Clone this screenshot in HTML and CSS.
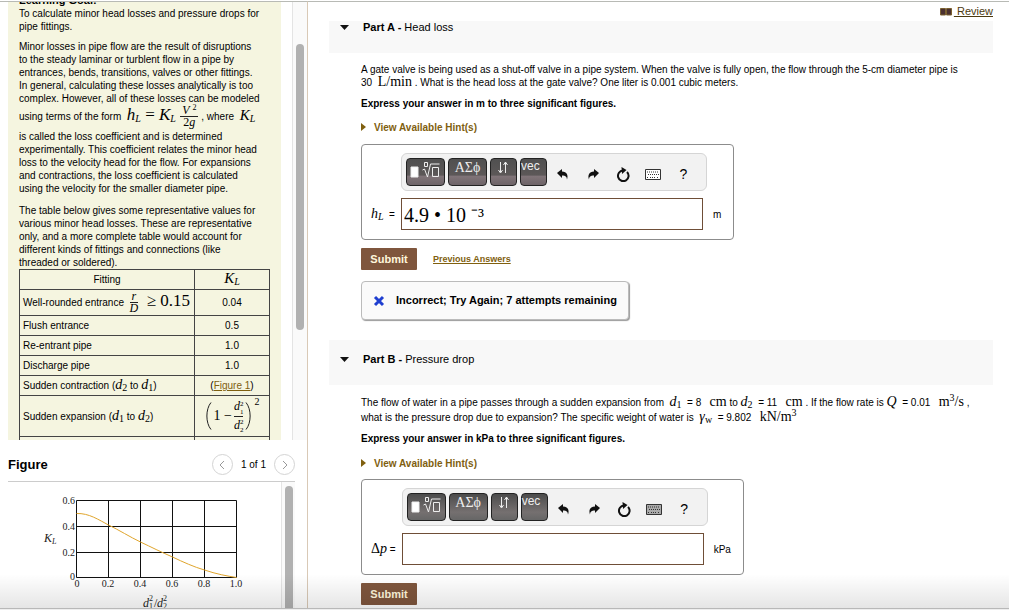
FILE: index.html
```html
<!DOCTYPE html>
<html lang="en">
<head>
<meta charset="utf-8">
<title>Head loss and pressure drop</title>
<link rel="stylesheet" href="styles.css">
</head>
<body>
<div class="page">
  <aside class="side">
    <div class="goal-pane">
      <section class="goal">
        <h2 class="goal-title">Learning Goal:</h2>
        <p>To calculate minor head losses and pressure drops for<br>pipe fittings.</p>
        <p>Minor losses in pipe flow are the result of disruptions<br>to the steady laminar or turblent flow in a pipe by<br>entrances, bends, transitions, valves or other fittings.<br>In general, calculating these losses analytically is too<br>complex. However, all of these losses can be modeled<span class="equation">using terms of the form&nbsp; <span class="math math-lg"><i>h<sub>L</sub></i> = <i>K<sub>L</sub></i> <span class="frac"><span class="num"><i>V</i> <sup>2</sup></span><span class="den">2<i>g</i></span></span></span> , where&nbsp; <span class="math math-md"><i>K<sub>L</sub></i></span></span>is called the loss coefficient and is determined<br>experimentally. This coefficient relates the minor head<br>loss to the velocity head for the flow. For expansions<br>and contractions, the loss coefficient is calculated<br>using the velocity for the smaller diameter pipe.</p>
        <p class="lead-in">The table below gives some representative values for<br>various minor head losses. These are representative<br>only, and a more complete table would account for<br>different kinds of fittings and connections (like<br>threaded or soldered).</p>
        <table class="losses">
          <thead><tr><th>Fitting</th><th><span class="math math-md"><i>K<sub>L</sub></i></span></th></tr></thead>
          <tbody>
            <tr class="row-tall"><td>Well-rounded entrance&nbsp; <span class="math math-lg"><span class="frac"><span class="num"><i>r</i></span><span class="den"><i>D</i></span></span>&nbsp; ≥ 0.15</span></td><td>0.04</td></tr>
            <tr><td>Flush entrance</td><td>0.5</td></tr>
            <tr><td>Re-entrant pipe</td><td>1.0</td></tr>
            <tr><td>Discharge pipe</td><td>1.0</td></tr>
            <tr><td>Sudden contraction (<span class="math"><i>d</i><sub>2</sub></span> to <span class="math"><i>d</i><sub>1</sub></span>)</td><td>(<a class="link" href="#figure">Figure 1</a>)</td></tr>
            <tr class="row-big"><td>Sudden expansion (<span class="math"><i>d</i><sub>1</sub></span> to <span class="math"><i>d</i><sub>2</sub></span>)</td>
              <td><span class="math paren-group"><svg class="paren" viewBox="0 0 7 28" aria-hidden="true"><path d="M6 .5C.5 7 .5 21 6 27.5"/></svg><span>1 −</span><span class="frac"><span class="num"><i>d</i><span class="pair"><span>2</span><span>1</span></span></span><span class="den"><i>d</i><span class="pair"><span>2</span><span>2</span></span></span></span><svg class="paren" viewBox="0 0 7 28" aria-hidden="true"><path d="M1 .5C6.500 7 6.500 21 1 27.500"/></svg><span class="power">2</span></span></td></tr>
            <tr><td></td><td></td></tr>
          </tbody>
        </table>
      </section>
      <div class="track goal-track"><div class="thumb goal-thumb"></div></div>
    </div>
    <section class="figure-pane" id="figure">
      <header class="figure-head">
        <h2 class="figure-title">Figure</h2>
        <button class="round" type="button" aria-label="Previous figure"><svg viewBox="0 0 8 10"><path d="M6 1 2 5l4 4"/></svg></button>
        <span class="count">1 of 1</span>
        <button class="round" type="button" aria-label="Next figure"><svg viewBox="0 0 8 10"><path d="m2 1 4 4-4 4"/></svg></button>
      </header>
      <div class="figure-body">
        <svg class="chart" viewBox="0 0 273 127" role="img" aria-label="Loss coefficient against area ratio">
          <path class="grid" d="M68.500 18.500h160v77h-160zM100.500 18.500v77M132.500 18.500v77M164.500 18.500v77M196.500 18.500v77M68.500 44.500h160M68.500 70.500h160"/>
          <path class="curve" d="M68.500 31.500C81 31 91 38 100.500 43C111 48 122 55 132.500 60C143 65 153 70 164.500 75C175 80 186 85 196.500 88C208 92 219 94 228.500 95.500"/>
          <g class="ticks">
            <g text-anchor="end"><text x="67" y="22">0.6</text><text x="67" y="48">0.4</text><text x="67" y="74">0.2</text><text x="67" y="98">0</text></g>
            <g text-anchor="middle"><text x="69" y="105">0</text><text x="100" y="105">0.2</text><text x="132" y="105">0.4</text><text x="164" y="105">0.6</text><text x="196" y="105">0.8</text><text x="228" y="105">1.0</text></g>
          </g>
          <g class="axis">
            <text class="it" x="36" y="60">K<tspan class="small" dy="2">L</tspan></text>
            <text class="it" x="135" y="125">d</text><text class="small" x="141" y="119">2</text><text class="small" x="141" y="127">1</text>
            <text x="146" y="125">/</text><text class="it" x="149" y="125">d</text><text class="small" x="155" y="119">2</text><text class="small" x="155" y="127">2</text>
          </g>
        </svg>
        <div class="track figure-track"><div class="thumb figure-thumb"></div></div>
      </div>
    </section>
  </aside>

  <main class="main">
    <div class="review"><svg class="book" viewBox="0 0 12 8" aria-hidden="true"><path d="M.5.500h5v6.500h-5zM6.500.500h5v6.500h-5z"/></svg><a href="#review">&nbsp;Review</a></div>

    <section class="part">
      <header class="part-head part-head-first"><svg class="caret" viewBox="0 0 9 5" aria-hidden="true"><path d="M0 0h9L4.500 5z"/></svg><h2><b>Part A -</b> Head loss</h2></header>
      <div class="part-body">
        <p>A gate valve is being used as a shut-off valve in a pipe system. When the valve is fully open, the flow through the 5-cm diameter pipe is<br>30 &nbsp;<span class="math">L/min</span> . What is the head loss at the gate valve? One liter is 0.001 cubic meters.</p>
        <p class="express">Express your answer in m to three significant figures.</p>
        <button class="hints" type="button"><svg viewBox="0 0 5 8" aria-hidden="true"><path d="M0 0l5 4-5 4z"/></svg>View Available Hint(s)</button>
        <form class="answer">
          <div class="tools">
            <button class="key key-wide" type="button" aria-label="Templates"><svg viewBox="0 0 31 18"><path class="fill" d="M1 6h7v10H1z"/><path d="M14.500 1.500h3v4h-3zM12.500 9l2-1 3 8 3-13h9M22.500 6.500h6v9h-6z"/></svg></button>
            <button class="key key-wide" type="button">ΑΣϕ</button>
            <button class="key" type="button" aria-label="Arrows"><svg viewBox="0 0 12 14"><path d="M3.500 1v10M1.500 9l2 3 2-3M8.500 12V1M6.500 4l2-3 2 3"/></svg></button>
            <button class="key key-vec" type="button">vec</button>
            <button class="tool" type="button" aria-label="Undo"><svg viewBox="0 0 12 12"><path class="solid" d="M0 5 5 1v2.500c5 0 6.500 4 5 8-.3-3-1.500-4-5-4V10z"/></svg></button>
            <button class="tool" type="button" aria-label="Redo"><svg viewBox="0 0 12 12"><path class="solid" d="M12 5 7 1v2.500c-5 0-6.500 4-5 8 .3-3 1.500-4 5-4V10z"/></svg></button>
            <button class="tool" type="button" aria-label="Reset"><svg class="reset" viewBox="0 0 14 15"><path class="ring" d="M7 3.500A5.300 5.300 0 1 0 11 5"/><path class="solid" d="M5.500 0l5 3-4.500 4z"/></svg></button>
            <button class="tool" type="button" aria-label="Keyboard"><svg class="board" viewBox="0 0 16 11"><path class="frame" d="M.5.500h15v10H.5z"/><path class="dots" d="M2 3h12M3 5.500h11M2 8.500h2M5 8.500h6M12 8.500h2"/></svg></button>
            <button class="tool" type="button" aria-label="Help">?</button>
          </div>
          <label class="symbol" for="answer-a"><span class="math"><i>h<sub>L</sub></i></span>&nbsp; =</label>
          <input class="field" id="answer-a" type="text" value="4.9 • 10 ⁻³">
          <span class="unit">m</span>
        </form>
        <div class="actions"><button class="submit" type="submit">Submit</button><a class="previous" href="#previous">Previous Answers</a></div>
        <div class="feedback"><svg viewBox="0 0 12 12" aria-hidden="true"><path d="M2 2l8 8M10 2l-8 8"/></svg>Incorrect; Try Again; 7 attempts remaining</div>
      </div>
    </section>

    <section class="part">
      <header class="part-head"><svg class="caret" viewBox="0 0 9 5" aria-hidden="true"><path d="M0 0h9L4.500 5z"/></svg><h2><b>Part B -</b> Pressure drop</h2></header>
      <div class="part-body part-body-b">
        <p>The flow of water in a pipe passes through a sudden expansion from&nbsp; <span class="math"><i>d</i><sub>1</sub></span>&nbsp; = 8 &nbsp; <span class="math">cm</span> to <span class="math"><i>d</i><sub>2</sub></span>&nbsp; = 11 &nbsp; <span class="math">cm</span> . If the flow rate is <span class="math"><i>Q</i></span>&nbsp; = 0.01 &nbsp; <span class="math">m<sup>3</sup>/s</span> ,<br>what is the pressure drop due to expansion? The specific weight of water is&nbsp; <span class="math"><i>γ</i><sub>w</sub></span>&nbsp; = 9.802 &nbsp; <span class="math">kN/m<sup>3</sup></span></p>
        <p class="express">Express your answer in kPa to three significant figures.</p>
        <button class="hints" type="button"><svg viewBox="0 0 5 8" aria-hidden="true"><path d="M0 0l5 4-5 4z"/></svg>View Available Hint(s)</button>
        <form class="answer">
          <div class="tools tools-plain">
            <button class="key key-wide" type="button" aria-label="Templates"><svg viewBox="0 0 31 18"><path class="fill" d="M1 6h7v10H1z"/><path d="M14.500 1.500h3v4h-3zM12.500 9l2-1 3 8 3-13h9M22.500 6.500h6v9h-6z"/></svg></button>
            <button class="key key-wide" type="button">ΑΣϕ</button>
            <button class="key" type="button" aria-label="Arrows"><svg viewBox="0 0 12 14"><path d="M3.500 1v10M1.500 9l2 3 2-3M8.500 12V1M6.500 4l2-3 2 3"/></svg></button>
            <button class="key key-vec" type="button">vec</button>
            <button class="tool" type="button" aria-label="Undo"><svg viewBox="0 0 12 12"><path class="solid" d="M0 5 5 1v2.500c5 0 6.500 4 5 8-.3-3-1.500-4-5-4V10z"/></svg></button>
            <button class="tool" type="button" aria-label="Redo"><svg viewBox="0 0 12 12"><path class="solid" d="M12 5 7 1v2.500c-5 0-6.500 4-5 8 .3-3 1.500-4 5-4V10z"/></svg></button>
            <button class="tool" type="button" aria-label="Reset"><svg class="reset" viewBox="0 0 14 15"><path class="ring" d="M7 3.500A5.300 5.300 0 1 0 11 5"/><path class="solid" d="M5.500 0l5 3-4.500 4z"/></svg></button>
            <button class="tool" type="button" aria-label="Keyboard"><svg class="board board-gray" viewBox="0 0 16 11"><path class="frame" d="M.5.500h15v10H.5z"/><path class="dots" d="M2 3h12M3 5.500h11M2 8.500h2M5 8.500h6M12 8.500h2"/></svg></button>
            <button class="tool" type="button" aria-label="Help">?</button>
          </div>
          <label class="symbol" for="answer-b"><span class="math">Δ<i>p</i></span> =</label>
          <input class="field" id="answer-b" type="text">
          <span class="unit">kPa</span>
        </form>
        <div class="actions"><button class="submit" type="submit">Submit</button></div>
      </div>
    </section>
  </main>
</div>
</body>
</html>
```
FILE: styles.css
```css
* { box-sizing: border-box; }
body {
  margin: 0;
  background: #fff;
  color: #000;
  font: 10px/13px "Liberation Sans", Arial, sans-serif;
}
h2, p { margin: 0; }
button, input { font: inherit; }
button { border: 0; padding: 0; background: none; color: inherit; cursor: pointer; }
svg { display: block; }

.page {
  display: grid;
  grid-template-columns: 308px 1fr;
  height: 100vh;
  padding-top: 1px;
  border-bottom: 1px solid #eee;
  position: relative;
}
.page::after {
  content: "";
  position: absolute;
  inset: auto 0 0;
  height: 34px;
  border-bottom: 1px solid #b8b8b8;
  background: linear-gradient(rgba(0, 0, 0, 0), rgba(0, 0, 0, .1));
  pointer-events: none;
}

/* Maths */
.math { font-family: "Liberation Serif", serif; font-size: 14px; line-height: 1px; }
.math-md { font-size: 15px; }
.math-lg { font-size: 17px; }
.math sub, .math sup { font-size: 10px; line-height: 0; }
.math sub { vertical-align: -2px; }
.math sup { vertical-align: 5px; }
.frac {
  display: inline-flex;
  flex-direction: column;
  align-items: center;
  vertical-align: middle;
  font-size: 12px;
  line-height: 11px;
}
.math .frac sup { font-size: 8px; vertical-align: 4px; }
.num { padding: 0 2px; border-bottom: 1px solid #222; }
.pair {
  display: inline-flex;
  flex-direction: column;
  vertical-align: middle;
  font-size: 7px;
  line-height: 8px;
}
.equation { display: block; height: 25px; line-height: 23px; white-space: nowrap; }

/* Left column */
.side {
  display: flex;
  flex-direction: column;
  min-height: 0;
  border-top: 1px solid #b8bab5;
  border-right: 1px solid #d9c9b6;
}
.goal-pane { display: flex; flex: 1; min-height: 0; overflow: hidden; padding-left: 8px; }
.goal { flex: 1; min-width: 0; padding: 0 11px; margin-right: 11px; background: #f5f5e0; }
.goal-title { margin-top: -8px; font-size: 11px; line-height: 13px; }
.goal p { margin-bottom: 7px; }
.goal p:nth-of-type(2) { margin-bottom: 9px; }
.goal .lead-in { margin-bottom: 0; }
.track { background: #fafafa; border-left: 1px solid #e4e4e4; }
.thumb { width: 8px; margin: 0 auto; border-radius: 4px; background: #b1b1b1; }
.goal-track { width: 15px; padding-top: 42px; }
.goal-thumb { height: 286px; }

.losses { width: 100%; border-collapse: collapse; }
.losses th, .losses td { height: 20px; padding: 0 3px; border: 1px solid #444; font-weight: normal; text-align: left; white-space: nowrap; }
.losses th, .losses td:last-child { text-align: center; }
.losses th:last-child { width: 75px; }
.losses .row-tall td { height: 26px; }
.losses .row-big td { height: 41px; }
.link { color: #80600f; }
.paren-group { display: inline-flex; align-items: center; gap: 2px; line-height: 16px; vertical-align: middle; }
.paren-group .frac { line-height: 16px; }
.paren-group .num { padding: 0; }
.paren { width: 7px; height: 28px; fill: none; stroke: #222; }
.power { align-self: flex-start; font-size: 10px; line-height: 8px; }

.figure-pane { height: 169px; padding-left: 8px; }
.figure-head { display: flex; align-items: center; height: 42px; margin-right: 12px; padding-top: 8px; border-bottom: 1px solid #ccc; }
.figure-title { flex: 1; font-size: 13px; }
.round { display: grid; place-items: center; width: 21px; height: 21px; border: 1px solid #d4d4d4; border-radius: 50%; }
.round svg { width: 8px; height: 10px; fill: none; stroke: #999; }
.count { margin: 0 8px; }
.figure-body { display: flex; height: 127px; margin-right: 12px; }
.chart { flex: 1; min-width: 0; height: 127px; overflow: visible; }
.figure-track { width: 14px; padding-top: 4px; }
.figure-thumb { height: 123px; border-radius: 4px 4px 0 0; }
.grid { fill: none; stroke: #111; }
.curve { fill: none; stroke: #e0a52c; }
.chart text { font-family: "Liberation Serif", serif; font-size: 10px; fill: #222; }
.chart .axis text { font-size: 12px; }
.chart .it { font-style: italic; }
.chart .axis .small { font-size: 8px; }

/* Right column */
.main { min-width: 0; overflow: hidden; padding: 0 16px 0 21px; border-top: 1px solid #b8bab5; }
.review { display: flex; justify-content: flex-end; align-items: center; gap: 2px; height: 19px; font-size: 11px; }
.review a { color: #4c3a10; }
.book { width: 12px; height: 8px; fill: #4a3030; stroke: #7a6030; }
.part-head { display: flex; align-items: center; height: 45px; padding: 0 11px 7px; background: #f8f8f8; }
.part-head-first { height: 32px; padding-bottom: 20px; }
.part-head h2 { margin-left: 14px; font-size: 11px; font-weight: normal; }
.caret { width: 9px; height: 5px; fill: #111; }
.part-body { padding: 10px 0 20px 32px; white-space: nowrap; }
.part-body-b { padding-bottom: 0; }
.part-body-b > p:first-child { line-height: 15px; }
.express { margin: 8px 0 9px; font-weight: bold; }
.part-body-b .express { margin: 7px 0 10px; }
.hints { display: flex; align-items: center; gap: 8px; height: 16px; color: #80600f; font-weight: bold; }
.hints svg { width: 5px; height: 8px; fill: #80600f; }
.answer {
  display: grid;
  grid-template-columns: auto 306px auto;
  align-items: center;
  gap: 7px 6px;
  width: fit-content;
  margin-top: 9px;
  padding: 8px 12px 9px 9px;
  border: 1px solid #8c8c8c;
  border-radius: 4px;
}
.part-body-b .answer { margin-top: 8px; }
.tools { grid-area: 1 / 2; display: flex; gap: 3px; height: 38px; padding: 4px; border: 1px solid #d5d5d5; border-radius: 6px; background: #f2f2f2; }
.symbol { grid-area: 2 / 1; }
.field { grid-area: 2 / 2; width: 302px; height: 32px; padding: 0 2px; border: 1px solid #6f4e37; background: #fff; font: 20px "Liberation Serif", serif; }
.unit { grid-area: 2 / 3; }
.key {
  display: flex;
  justify-content: center;
  width: 27px;
  height: 28px;
  padding-top: 2px;
  border: 1px solid #222;
  border-radius: 4px;
  background: linear-gradient(#505050, #5c5858 62%, #807478 66%, #6e6468);
  color: #eee;
  font: 14px/14px "Liberation Serif", serif;
}
.tools-plain .key { background: linear-gradient(#4c4c4c, #757070 70%, #666); }
.key-wide { width: 39px; }
.key-vec { justify-content: flex-start; padding-top: 1px; font: 12px/13px "Liberation Sans", Arial, sans-serif; }
.key svg { width: 12px; height: 14px; fill: none; stroke: #eee; }
.key-wide svg { width: 31px; height: 18px; }
.key .fill { fill: #fff; }
.tool { display: grid; place-items: center; width: 27px; padding-top: 4px; font-size: 14px; }
.tool svg { width: 12px; height: 12px; }
.tool .reset { width: 14px; height: 15px; }
.tool .board { width: 16px; height: 11px; }
.solid { fill: #111; }
.ring { fill: none; stroke: #111; stroke-width: 2; }
.frame { fill: #fff; stroke: #333; }
.dots { stroke: #333; stroke-dasharray: 1 1; }
.board-gray .frame { fill: #aaa; }
.actions { display: flex; align-items: center; gap: 16px; margin-top: 8px; }
.submit { width: 56px; height: 22px; border-radius: 1px; background: #7f563d; color: #fff8dc; font-size: 11px; font-weight: bold; }
.previous { color: #80600f; font-size: 9px; font-weight: bold; }
.feedback {
  display: flex;
  align-items: center;
  gap: 11px;
  width: fit-content;
  height: 39px;
  margin-top: 11px;
  padding: 0 11px;
  border: 1px solid #bbb;
  border-radius: 4px;
  box-shadow: 1px 1px 1px #999;
  background: #fafafa;
  font-size: 11px;
  font-weight: bold;
}
.feedback svg { width: 12px; height: 12px; fill: none; stroke: #1f3fd0; stroke-width: 3; }
```
